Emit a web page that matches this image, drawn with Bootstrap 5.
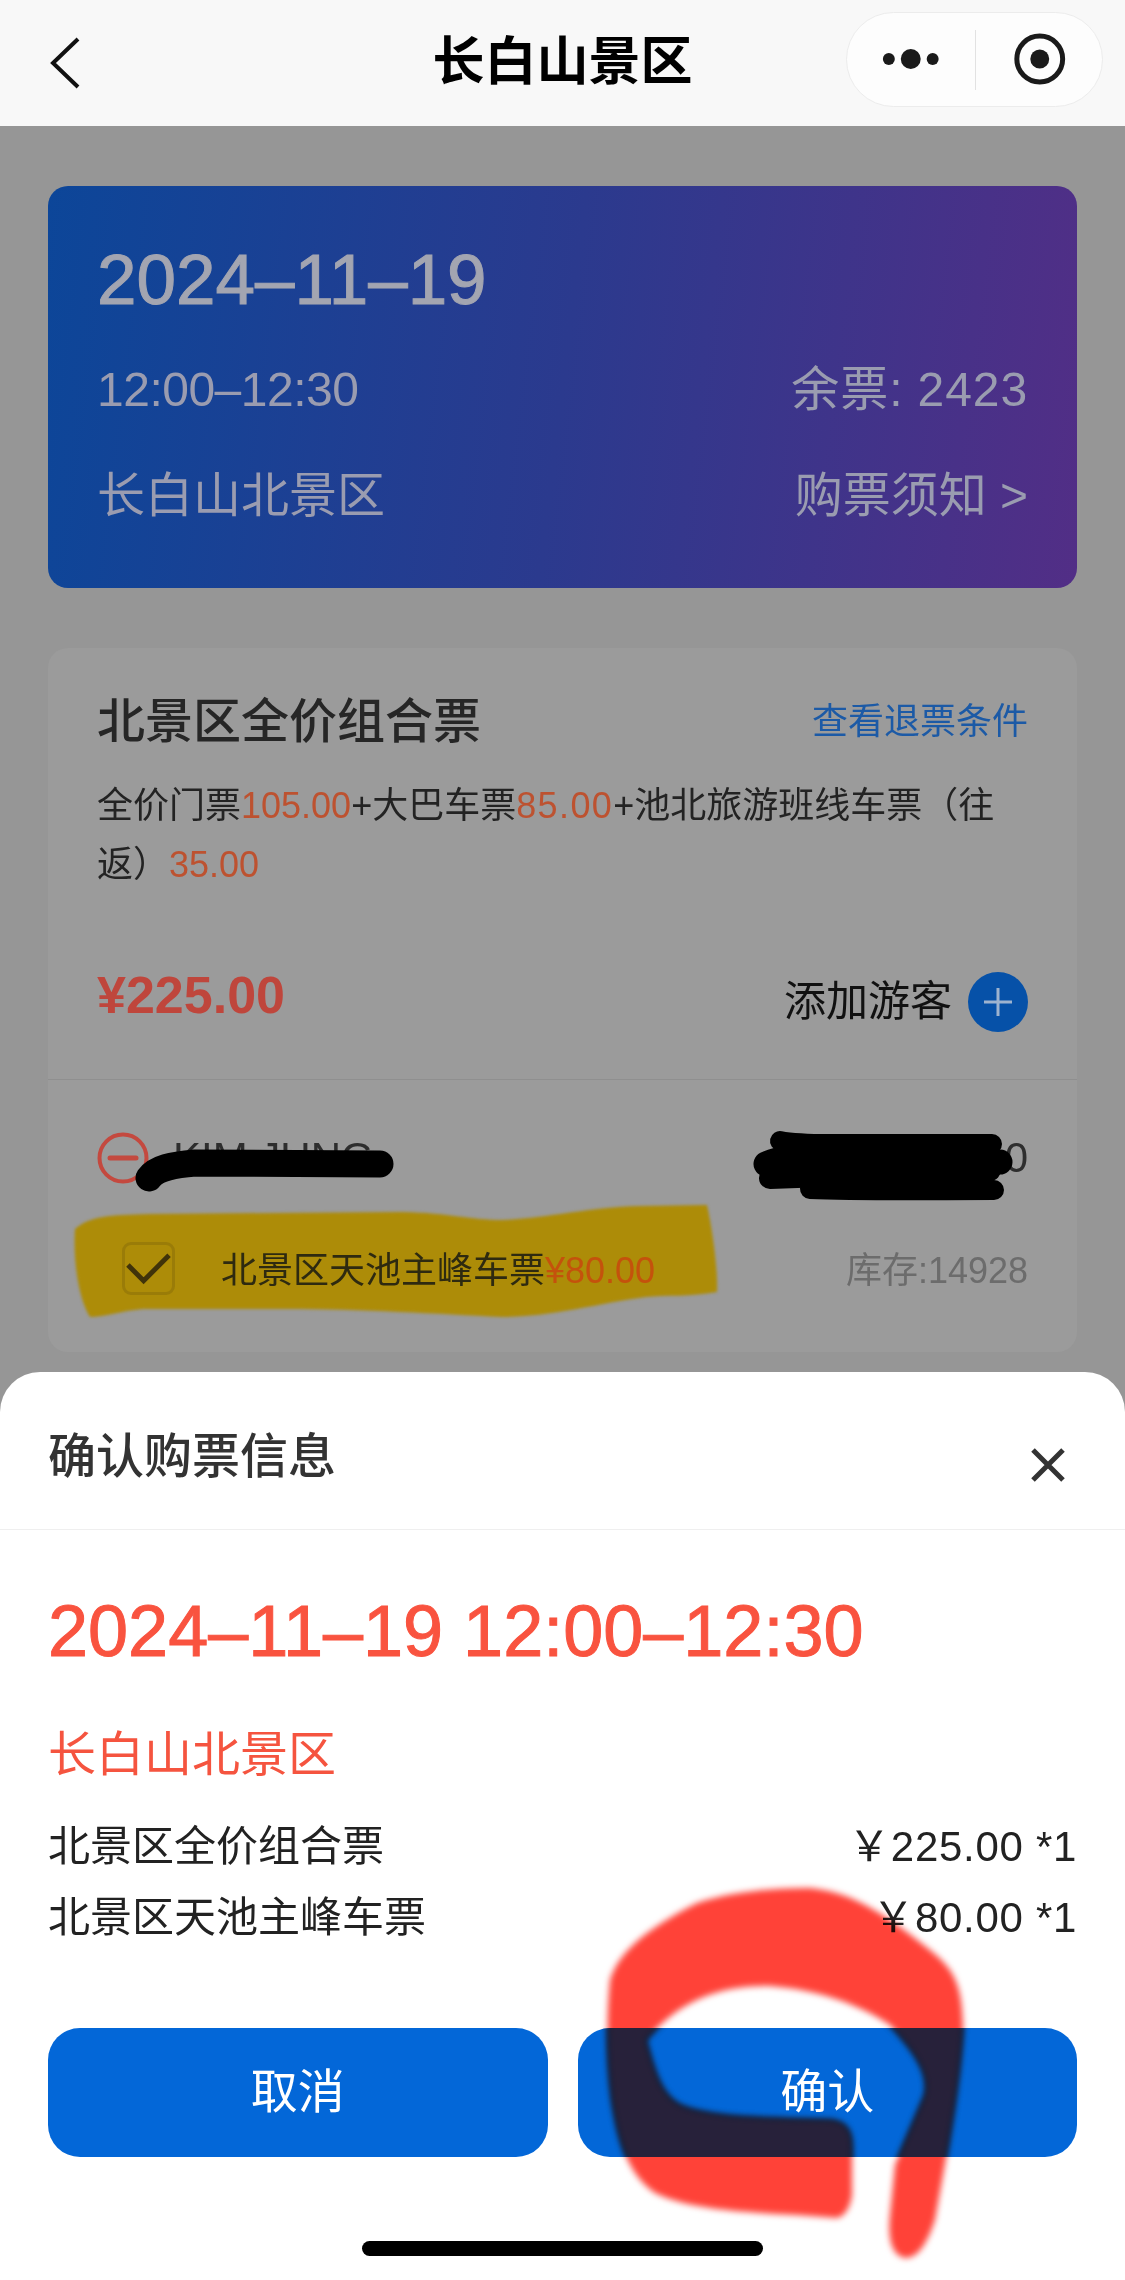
<!DOCTYPE html>
<html lang="zh-CN">
<head>
  <meta charset="UTF-8">
  <title>长白山景区</title>
  <link href="https://cdn.jsdelivr.net/npm/bootstrap@5.3.3/dist/css/bootstrap.min.css" rel="stylesheet">
  <style>
    body { margin: 0; background: #969696; font-family: "Liberation Sans", "Noto Sans CJK SC", sans-serif; }
    .phone { position: relative; width: 1125px; height: 2280px; overflow: hidden; background: #969696; }

    .top-bar { position: relative; height: 126px; background: #f8f8f8; padding: 0 22px 0 50px; }
    .top-title { position: absolute; left: 0; right: 0; top: 32px; line-height: 60px; text-align: center; font-size: 52px; font-weight: 700; color: #000; }
    .capsule { width: 257px; height: 95px; margin-top: -7px; border-radius: 48px; background: #fdfdfd; border: 1px solid #ececec; }
    .capsule-line { width: 1px; height: 60px; background: #e2e2e2; }

    .page-main { height: 1246px; padding: 60px 48px 0; }

    .hero { height: 402px; padding: 54px 49px 0; border: 0; border-radius: 20px; background: linear-gradient(97deg, #0c4699 0%, #2b3a8e 50%, #522e86 100%); }
    .hero-date { font-size: 71px; line-height: 80px; color: #a3a5b1; -webkit-text-stroke: 1px #a3a5b1; }
    .hero-row { font-size: 48px; line-height: 60px; color: #9a9cb0; }
    .hero-row.first { margin-top: 40px; }
    .hero-row.second { margin-top: 46px; }
    .hero-time { letter-spacing: -0.5px; }
    .hero-left { letter-spacing: 0.9px; }

    .ticket { height: 704px; margin-top: 60px; border: 0; border-radius: 20px; background: #9b9b9b; color: #232323; }
    .ticket-top { height: 432px; padding: 44px 49px 0; border-bottom: 1px solid #8f8f8f; }
    .ticket-name { font-size: 48px; line-height: 60px; font-weight: 500; color: #262626; }
    .ticket-link { font-size: 36px; line-height: 60px; color: #1c5aa6; }
    .ticket-desc { margin-top: 24px; font-size: 36px; line-height: 59px; white-space: nowrap; }
    .money { color: #bd5230; }
    .money.wide { letter-spacing: 1.4px; }
    .price-row { margin-top: 78px; }
    .price { font-size: 52px; line-height: 46px; font-weight: 700; color: #bf463c; }
    .add-text { font-size: 42px; line-height: 60px; color: #111; }
    .round-add { width: 60px; height: 60px; margin-left: 16px; }

    .ticket-bottom { padding: 53px 49px 0; }
    .person { height: 50px; font-size: 42px; line-height: 50px; color: #2e2e2e; }
    .extra { position: relative; height: 52px; margin-top: 59px; padding-left: 25px; font-size: 36px; line-height: 52px; }
    .extra > span, .extra > div { position: relative; z-index: 1; }
    .extra-text { padding-top: 5px; }
    .marker { position: absolute; left: -49px; top: -59px; width: 720px; height: 180px; }
    .marker path { filter: blur(1.5px); }
    .tick-box { width: 53px; height: 53px; margin-right: 46px; border: 3px solid #9a7c08; border-radius: 9px; }
    .extra-name { color: #2e2a10; }
    .extra-price { color: #c4520c; }
    .stock { color: #6c6c6c; padding-top: 5px; }

    .sheet { height: 908px; background: #fff; border-radius: 40px 40px 0 0; }
    .sheet-head { height: 158px; padding: 55px 59px 0 48px; border-bottom: 1px solid #efefef; }
    .sheet-title { font-size: 48px; line-height: 60px; font-weight: 500; color: #333; }
    .sheet-close { width: 36px; height: 36px; margin-top: 20px; }
    .sheet-body { padding: 61px 48px 0; }
    .sheet-date { font-size: 72px; line-height: 80px; color: #f9533f; -webkit-text-stroke: 1px #f9533f; white-space: nowrap; }
    .sheet-place { margin-top: 54px; margin-bottom: -2px; font-size: 48px; line-height: 60px; color: #f5543f; }
    .sheet-rows { margin-top: 28px; font-size: 42px; line-height: 71px; color: #222; }
    .sheet-amount { letter-spacing: 0.7px; }
    .sheet-btns { margin-top: 75px; gap: 30px; }
    .btn-blue { height: 129px; border: 0; border-radius: 32px; background: #0367d8; color: #fff; font-size: 47px; }
    .home-bar { width: 401px; height: 15px; margin: 84px auto 0; border-radius: 8px; background: #000; }

    .scrawl { position: absolute; left: 0; top: 0; width: 1125px; height: 2280px; pointer-events: none; }
    .scrawl-red { mix-blend-mode: multiply; }
    .soft-edge { filter: blur(3px); }
  </style>
</head>
<body>
  <div class="phone d-flex flex-column">

    <div class="top-bar d-flex justify-content-between align-items-center flex-shrink-0">
      <svg width="30" height="52" viewBox="0 0 30 52"><path d="M28 2 L3 26 L28 50" fill="none" stroke="#111" stroke-width="4"/></svg>
      <div class="top-title">长白山景区</div>
      <div class="capsule d-flex align-items-center position-relative">
        <svg width="128" height="95" viewBox="0 0 128 95"><circle cx="42" cy="47" r="6" fill="#1a1a1a"/><circle cx="64" cy="47" r="10" fill="#1a1a1a"/><circle cx="86" cy="47" r="6" fill="#1a1a1a"/></svg>
        <div class="capsule-line"></div>
        <svg width="127" height="95" viewBox="0 0 127 95"><circle cx="64" cy="47" r="23" fill="none" stroke="#1a1a1a" stroke-width="5"/><circle cx="64" cy="47" r="9.5" fill="#1a1a1a"/></svg>
      </div>
    </div>

    <div class="page-main flex-shrink-0">
      <div class="card hero">
        <div class="hero-date">2024–11–19</div>
        <div class="hero-row first d-flex justify-content-between"><span class="hero-time">12:00–12:30</span><span class="hero-left">余票: 2423</span></div>
        <div class="hero-row second d-flex justify-content-between"><span>长白山北景区</span><span>购票须知 &gt;</span></div>
      </div>

      <div class="card ticket">
        <div class="ticket-top">
          <div class="d-flex justify-content-between">
            <span class="ticket-name">北景区全价组合票</span>
            <span class="ticket-link">查看退票条件</span>
          </div>
          <div class="ticket-desc">
            <div>全价门票<span class="money">105.00</span>+大巴车票<span class="money wide">85.00</span>+池北旅游班线车票（往</div>
            <div>返）<span class="money">35.00</span></div>
          </div>
          <div class="price-row d-flex justify-content-between align-items-start">
            <span class="price">¥225.00</span>
            <div class="d-flex align-items-center">
              <span class="add-text">添加游客</span>
              <svg class="round-add" viewBox="0 0 60 60"><circle cx="30" cy="30" r="30" fill="#0651a8"/><path d="M30 16 V44 M16 30 H44" stroke="#9db3cf" stroke-width="3"/></svg>
            </div>
          </div>
        </div>
        <div class="ticket-bottom">
          <div class="person d-flex justify-content-between align-items-center">
            <div class="d-flex align-items-center gap-4">
              <svg width="52" height="52" viewBox="0 0 52 52"><circle cx="26" cy="26" r="23.5" fill="none" stroke="#c4493f" stroke-width="4"/><path d="M13 26 H39" stroke="#c4493f" stroke-width="5" stroke-linecap="round"/></svg>
              <span>KIM JUNG</span>
            </div>
            <span>0</span>
          </div>
          <div class="extra d-flex justify-content-between align-items-center">
            <svg class="marker" viewBox="48 1185 720 180"><path d="M75 1231 C90 1218 110 1217 150 1216 L402 1214 C450 1215 470 1222 502 1222 C550 1220 590 1209 640 1208 L707 1207 C712 1230 718 1270 717 1294 C690 1299 665 1297 646 1299 C600 1305 550 1319 502 1319 C440 1316 360 1311 287 1311 L143 1311 C120 1313 105 1319 90 1319 C78 1300 73 1260 75 1231 Z" fill="#ad8c08"/></svg>
            <div class="d-flex align-items-center">
              <div class="tick-box d-flex align-items-center justify-content-center">
                <svg width="48" height="34" viewBox="0 0 48 34"><path d="M3 14 L19 30 L45 4" fill="none" stroke="#40330a" stroke-width="5"/></svg>
              </div>
              <span class="extra-name extra-text">北景区天池主峰车票<span class="extra-price">¥80.00</span></span>
            </div>
            <span class="stock">库存:14928</span>
          </div>
        </div>
      </div>
    </div>

    <div class="sheet flex-shrink-0">
      <div class="sheet-head d-flex justify-content-between align-items-start">
        <span class="sheet-title">确认购票信息</span>
        <svg class="sheet-close" viewBox="0 0 36 36"><path d="M3 3 L33 33 M33 3 L3 33" stroke="#333" stroke-width="5"/></svg>
      </div>
      <div class="sheet-body">
        <div class="sheet-date">2024–11–19 12:00–12:30</div>
        <div class="sheet-place">长白山北景区</div>
        <div class="sheet-rows">
          <div class="d-flex justify-content-between"><span>北景区全价组合票</span><span class="sheet-amount">￥225.00 *1</span></div>
          <div class="d-flex justify-content-between"><span>北景区天池主峰车票</span><span class="sheet-amount">￥80.00 *1</span></div>
        </div>
        <div class="sheet-btns d-flex">
          <button type="button" class="btn btn-blue flex-fill w-50">取消</button>
          <button type="button" class="btn btn-blue flex-fill w-50">确认</button>
        </div>
      </div>
      <div class="home-bar"></div>
    </div>

    <!-- hand drawn marks on top of the screenshot -->
    <svg class="scrawl" viewBox="0 0 1125 2280">
      <g fill="none" stroke="#000" stroke-linecap="round" stroke-linejoin="round">
        <path d="M149 1178 C156 1168 172 1165 195 1163 L380 1164" stroke-width="27"/>
        <path d="M780 1141 C790 1143 800 1144 830 1144 L992 1144" stroke-width="20"/>
        <path d="M766 1164 C780 1157 800 1156 825 1156 L1000 1162" stroke-width="25"/>
        <path d="M770 1178 C830 1176 900 1173 990 1170" stroke-width="22"/>
        <path d="M810 1189 C860 1191 930 1190 994 1190" stroke-width="20"/>
      </g>
      <defs>
        <path id="redStroke" d="M837 2218 C780 2212 700 2215 655 2193 C630 2175 620 2150 612 2100 C607 2060 606 2020 610 1980 C618 1955 640 1932 697 1903 C730 1892 770 1888 810 1888 C850 1892 880 1910 930 1950 C955 1970 962 1985 963 2027 C960 2080 948 2150 935 2220 C925 2250 915 2258 905 2258 C890 2255 888 2235 890 2215 L895 2165 L925 2095 C928 2080 925 2062 890 2025 C860 2005 820 1990 770 1986 C720 1985 680 2000 646 2040 C655 2075 662 2095 680 2105 C710 2118 760 2118 830 2120 C850 2122 852 2135 852 2150 L852 2195 C850 2208 845 2216 837 2218 Z"/>
        <clipPath id="onButton"><rect x="578" y="2028" width="499" height="129" rx="32"/></clipPath>
      </defs>
      <g class="scrawl-red"><use href="#redStroke" fill="#ff4238" class="soft-edge"/></g>
      <g clip-path="url(#onButton)"><use href="#redStroke" fill="#27213a" class="soft-edge"/></g>
    </svg>
  </div>

  <script src="https://cdn.jsdelivr.net/npm/bootstrap@5.3.3/dist/js/bootstrap.bundle.min.js"></script>
</body>
</html>
